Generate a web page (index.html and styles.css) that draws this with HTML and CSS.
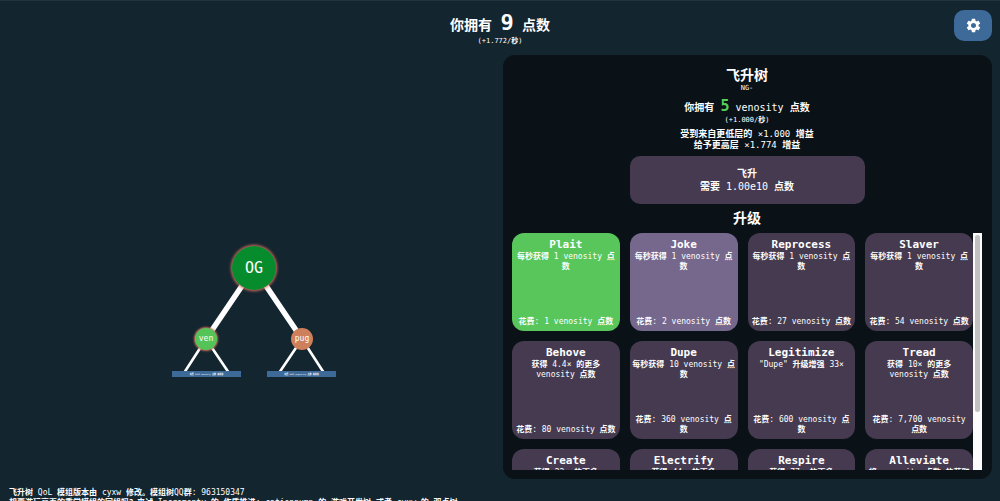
FILE: index.html
```html
<!DOCTYPE html>
<html lang="zh-CN">
<head>
<meta charset="utf-8">
<title>飞升树</title>
<link rel="stylesheet" href="styles.css">
</head>
<body>
<header class="top">
  <div class="points">
    <h1 class="points-total">你拥有 <span class="points-value">9</span> 点数</h1>
    <p class="rate">(+1.772/<b>秒</b>)</p>
  </div>
  <button class="settings" type="button" aria-label="设置">
    <svg class="gear" viewBox="0 0 24 24" aria-hidden="true"><path d="M19.14 12.94c.04-.3.06-.61.06-.94 0-.32-.02-.64-.07-.94l2.03-1.58c.18-.14.23-.41.12-.61l-1.92-3.32c-.12-.22-.37-.29-.59-.22l-2.39.96c-.5-.38-1.03-.7-1.62-.94l-.36-2.54c-.04-.24-.24-.41-.48-.41h-3.84c-.24 0-.43.17-.47.41l-.36 2.54c-.59.24-1.13.57-1.62.94l-2.39-.96c-.22-.08-.47 0-.59.22L2.74 8.87c-.12.21-.08.47.12.61l2.03 1.58c-.05.3-.09.63-.09.94s.02.64.07.94l-2.03 1.58c-.18.14-.23.41-.12.61l1.92 3.32c.12.22.37.29.59.22l2.39-.96c.5.38 1.03.7 1.62.94l.36 2.54c.05.24.24.41.48.41h3.84c.24 0 .44-.17.47-.41l.36-2.54c.59-.24 1.13-.56 1.62-.94l2.39.96c.22.08.47 0 .59-.22l1.92-3.32c.12-.22.07-.47-.12-.61l-2.01-1.58zM12 15.6c-1.98 0-3.6-1.62-3.6-3.6s1.62-3.6 3.6-3.6 3.6 1.62 3.6 3.6-1.62 3.6-3.6 3.6z"/></svg>
  </button>
</header>
<main class="main">
  <section class="tree">
    <div class="canvas">
      <svg class="branches" viewBox="0 0 164 132" aria-hidden="true">
        <g stroke="#fff" stroke-width="5.5"><path d="M82 23L34 94M82 23L130 94"/></g>
        <g stroke="#fff" stroke-width="2.6"><path d="M34 94L12 128M34 94L57 128M130 94L107 128M130 94L152 128"/></g>
      </svg>
      <button class="node node-og" type="button">OG</button>
      <button class="node node-ven" type="button">ven</button>
      <button class="node node-pug" type="button">pug</button>
      <button class="lock lock-ven" type="button"><b>花费</b> 1e10 venosity <b>点数</b> <b>来解锁</b></button>
      <button class="lock lock-pug" type="button"><b>花费</b> 1e20 pugnacity <b>点数</b> <b>来解锁</b></button>
    </div>
  </section>
  <section class="panel">
    <h2 class="heading">飞升树</h2>
    <p class="mode">NG-</p>
    <p class="amount"><b>你拥有</b> <span class="amount-value">5</span> venosity <b>点数</b></p>
    <p class="rate">(+1.000/<b>秒</b>)</p>
    <div class="gains">
      <p><b>受到来自更低层的</b> ×1.000 <b>增益</b></p>
      <p><b>给予更高层</b> ×1.774 <b>增益</b></p>
    </div>
    <button class="ascend" type="button"><b>飞升</b><span><b>需要</b> 1.00e10 <b>点数</b></span></button>
    <h2 class="heading heading-upgrades">升级</h2>
    <div class="scroller">
      <div class="cards">
        <button class="card bought" type="button"><strong>Plait</strong><span><b>每秒获得</b> 1 venosity <b>点<br>数</b></span><span class="cost"><b>花费</b>: 1 venosity <b>点数</b></span></button>
        <button class="card ready" type="button"><strong>Joke</strong><span><b>每秒获得</b> 1 venosity <b>点<br>数</b></span><span class="cost"><b>花费</b>: 2 venosity <b>点数</b></span></button>
        <button class="card" type="button"><strong>Reprocess</strong><span><b>每秒获得</b> 1 venosity <b>点<br>数</b></span><span class="cost"><b>花费</b>: 27 venosity <b>点数</b></span></button>
        <button class="card" type="button"><strong>Slaver</strong><span><b>每秒获得</b> 1 venosity <b>点<br>数</b></span><span class="cost"><b>花费</b>: 54 venosity <b>点数</b></span></button>
        <button class="card" type="button"><strong>Behove</strong><span><b>获得</b> 4.4× <b>的更多</b><br>venosity <b>点数</b></span><span class="cost"><b>花费</b>: 80 venosity <b>点数</b></span></button>
        <button class="card" type="button"><strong>Dupe</strong><span><b>每秒获得</b> 10 venosity <b>点<br>数</b></span><span class="cost"><b>花费</b>: 360 venosity <b>点<br>数</b></span></button>
        <button class="card" type="button"><strong>Legitimize</strong><span>"Dupe" <b>升级增强</b> 33×</span><span class="cost"><b>花费</b>: 600 venosity <b>点<br>数</b></span></button>
        <button class="card" type="button"><strong>Tread</strong><span><b>获得</b> 10× <b>的更多</b><br>venosity <b>点数</b></span><span class="cost"><b>花费</b>: 7,700 venosity<br><b>点数</b></span></button>
        <button class="card" type="button"><strong>Create</strong><span><b>获得</b> 22× <b>的更多</b></span></button>
        <button class="card" type="button"><strong>Electrify</strong><span><b>获得</b> 44× <b>的更多</b></span></button>
        <button class="card" type="button"><strong>Respire</strong><span><b>获得</b> 77× <b>的更多</b></span></button>
        <button class="card" type="button"><strong>Alleviate</strong><span><b>将</b> venosity <b>点数 的获取</b></span></button>
      </div>
      <div class="track"><div class="thumb"></div></div>
    </div>
  </section>
</main>
<footer class="foot">
  <p><b>飞升树</b> QoL <b>模组版本由</b> cyxw <b>修改。模组树</b>QQ<b>群</b>: 963150347</p>
  <p><b>想要游玩高页的重学模组的同组吗？来试</b> Incrementy <b>的 作质推进</b>; cationpump <b>的 游戏开发树 或者</b> cyxw <b>的 双点树</b></p>
</footer>
</body>
</html>
```
FILE: styles.css
```css
* { box-sizing: border-box; }

body {
  margin: 0;
  height: 100vh;
  overflow: hidden;
  display: flex;
  flex-direction: column;
  background: #13252f;
  border-top: 1px solid #1f343f;
  color: #fff;
  font-family: "DejaVu Sans Mono", "Noto Sans CJK SC", monospace;
  font-size: 8px;
  line-height: 10px;
  white-space: nowrap;
}

h1, h2, p { margin: 0; }

button {
  border: 0;
  padding: 0;
  color: inherit;
  font: inherit;
  white-space: nowrap;
  cursor: pointer;
}

.top {
  display: grid;
  grid-template-columns: 1fr auto 1fr;
  align-items: start;
  height: 54px;
  flex: none;
  padding: 9px 8px 0;
}

.points { grid-column: 2; padding-top: 1px; text-align: center; }
.points-total { font-size: 14px; line-height: 24px; }
.points-value { font-size: 22px; }

.rate { font-size: 7px; line-height: 9px; }

.settings {
  justify-self: end;
  display: grid;
  place-items: center;
  width: 38px;
  height: 31px;
  border-radius: 10px;
  background: #3d6a98;
}
.gear { width: 17px; height: 17px; fill: #fff; }

.main {
  flex: 1;
  min-height: 0;
  display: grid;
  grid-template-columns: 503fr 489fr;
  padding-right: 8px;
}

.tree {
  display: flex;
  justify-content: center;
  align-items: flex-start;
  padding: 190px 0 0 5px;
}
.canvas { position: relative; width: 164px; height: 132px; }
.branches { display: block; width: 100%; height: 100%; }

.node {
  position: absolute;
  border-radius: 50%;
  font-size: 8px;
}
.node-og {
  left: 60px;
  top: 1px;
  width: 44px;
  height: 44px;
  background: #068c2c;
  box-shadow: 0 0 3px 1px #dd6f62;
  font-size: 15px;
}
.node-ven {
  left: 23px;
  top: 83px;
  width: 22px;
  height: 22px;
  background: #55c458;
  box-shadow: 0 0 2px 1px #c96f5c;
}
.node-pug {
  left: 119px;
  top: 83px;
  width: 22px;
  height: 22px;
  background: #ce7f5b;
}

.lock {
  position: absolute;
  top: 126px;
  width: 69px;
  height: 6px;
  background: #3d6a98;
  font-size: 2px;
  line-height: 6px;
}
.lock-ven { left: 0; }
.lock-pug { right: 0; }

.panel {
  display: flex;
  flex-direction: column;
  min-height: 0;
  padding: 10px 10px 9px 9px;
  border-radius: 12px;
  background: #0a1218;
  text-align: center;
}

.heading { font-size: 14px; line-height: 20px; }
.heading-upgrades { line-height: 29px; }
.mode { font-size: 7px; line-height: 7px; }
.amount { margin-top: 6px; font-size: 10px; line-height: 17px; }
.amount-value { color: #55cf58; font-size: 15px; font-weight: bold; }
.gains { margin: 4px 0 5px; font-size: 9px; line-height: 11px; }

.ascend {
  align-self: center;
  flex: none;
  display: flex;
  flex-direction: column;
  justify-content: center;
  width: 50%;
  height: 48px;
  border-radius: 10px;
  background: #453a4f;
  font-size: 10px;
  line-height: 13px;
}

.scroller {
  flex: 1;
  min-height: 0;
  display: flex;
  overflow: hidden;
}
.cards {
  flex: 1;
  display: grid;
  grid-template-columns: repeat(4, minmax(0, 1fr));
  grid-auto-rows: 98px;
  gap: 10px;
}
.card {
  display: flex;
  flex-direction: column;
  align-items: center;
  padding: 4px 2px;
  border-radius: 12px;
  background: #453a4f;
}
.card strong { font-size: 11px; line-height: 15px; }
.bought { background: #58c65a; }
.ready { background: #76678d; }
.cost { margin-top: auto; }

.track { width: 9px; padding: 2px; background: #fcfcfc; }
.thumb { height: 76%; border-radius: 3px; background: #c1c1c1; }

.foot {
  flex: none;
  height: 22px;
  padding: 9px 9px 0;
  overflow: hidden;
}
```
